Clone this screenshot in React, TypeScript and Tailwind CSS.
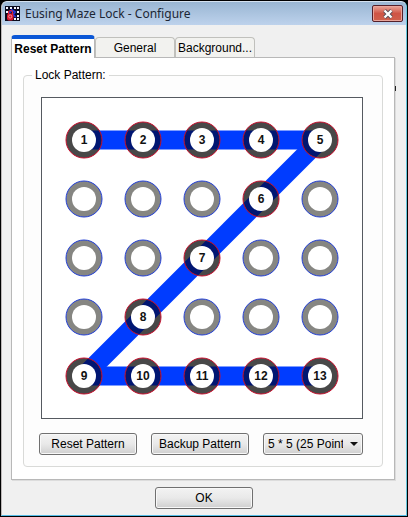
import { useState } from "react";

const SPACING = 59;
const ORIGIN = 42;
const ROUTE = [0, 1, 2, 3, 4, 8, 12, 16, 20, 21, 22, 23, 24];

const center = (i: number) => ({
  x: ORIGIN + (i % 5) * SPACING,
  y: ORIGIN + Math.floor(i / 5) * SPACING,
});

const SEGMENTS = [
  [0, 4],
  [4, 20],
  [20, 24],
];

function Route({ color }: { color: string }) {
  return (
    <>
      {SEGMENTS.map(([a, b]) => (
        <line
          key={a}
          x1={center(a).x}
          y1={center(a).y}
          x2={center(b).x}
          y2={center(b).y}
          stroke={color}
          strokeWidth="19"
        />
      ))}
    </>
  );
}

function Board() {
  const nodes = Array.from({ length: 25 }, (_, i) => i);
  return (
    <div className="border border-[#555a60] bg-white">
      <svg viewBox="0 0 320 320" className="block h-auto w-full" role="img" aria-label="Lock pattern">
        <clipPath id="route-nodes">
          {ROUTE.map((i) => (
            <circle key={i} cx={center(i).x} cy={center(i).y} r="18" />
          ))}
        </clipPath>
        <Route color="#003cff" />
        {nodes.map((i) => (
          <circle
            key={i}
            cx={center(i).x}
            cy={center(i).y}
            r="18"
            fill={ROUTE.includes(i) ? "#484848" : "#868682"}
          />
        ))}
        <g clipPath="url(#route-nodes)">
          <Route color="#001672" />
        </g>
        {nodes.map((i) => {
          const { x, y } = center(i);
          const step = ROUTE.indexOf(i);
          const on = step >= 0;
          return (
            <g key={i}>
              <circle cx={x} cy={y} r="18" fill="none" stroke={on ? "#c8102e" : "#2340d8"} strokeWidth="1" />
              <circle cx={x} cy={y} r="12" fill="#ffffff" />
              {on && (
                <text
                  x={x}
                  y={y + 4}
                  textAnchor="middle"
                  className="fill-[#111111] font-['Liberation_Sans',Arial,sans-serif] text-[12px] font-bold"
                >
                  {step + 1}
                </text>
              )}
            </g>
          );
        })}
      </svg>
    </div>
  );
}

function PushButton({ children }: { children: string }) {
  return (
    <button
      type="button"
      className="h-[22px] w-[98px] rounded-[3px] border border-[#707070] bg-linear-to-b from-[#f3f3f3] from-0% via-[#e9e9e9] via-50% to-[#cfcfcf] text-[12px] leading-5 whitespace-nowrap shadow-[inset_0_0_0_1px_#f8f8f8]"
    >
      {children}
    </button>
  );
}

function MazeIcon() {
  return (
    <svg viewBox="0 0 15 15" className="size-[15px] shrink-0" aria-hidden="true">
      <rect width="15" height="15" fill="#0a0a1c" />
      <path
        d="M1 1h2v2H1zM5 1h2v2H5zM9 1h2v2H9zM12 1h2v2h-2zM12 5h2v2h-2zM12 9h2v2h-2zM12 12h2v2h-2zM9 12h2v2H9zM1 5h2v2H1z"
        fill="#f4f4ff"
      />
      <path d="M4 7L7 4L10 6L8 9L11 11" stroke="#2434d8" strokeWidth="2" fill="none" />
      <path d="M3.5 8V6.5a2 2 0 0 1 4 0V8" stroke="#e02038" strokeWidth="1.2" fill="none" />
      <rect x="2" y="7.5" width="6.5" height="7" rx="2" fill="#d81830" />
      <circle cx="5.2" cy="10.5" r="1.6" fill="none" stroke="#ffb0b8" strokeWidth="0.7" />
    </svg>
  );
}

const TABS = ["Reset Pattern", "General", "Background..."];

export default function App() {
  const [tab, setTab] = useState(0);
  return (
    <div className="bg-black px-px pt-px pb-[2px] font-['Liberation_Sans',Arial,sans-serif] text-[12px] text-black">
      <div className="rounded-t-[6px] border border-t-[#d5e2f0] border-r-[#67c6dc] border-b-[#55bce6] border-l-[#bdb8b8] bg-[#f0f0f0]">
        <header className="flex h-[23px] items-center rounded-t-[5px] bg-linear-to-b from-[#9ab6d3] to-[#bdd2ec] pr-[3px] pl-[3px]">
          <MazeIcon />
          <h1 className="ml-[5px] flex-1 font-['Noto_Sans','Open_Sans',sans-serif] text-[12px] leading-5 text-[#1c2634]">
            Eusing Maze Lock - Configure
          </h1>
          <button
            type="button"
            aria-label="Close"
            className="flex h-[17px] w-[31px] items-center justify-center rounded-[2px] border border-[#54202a] bg-linear-to-b from-[#e8a59a] from-0% via-[#cf5445] via-50% to-[#d0604c] shadow-[inset_0_0_0_1px_#e9a59b]"
          >
            <svg viewBox="0 0 12 10" className="h-[10px] w-[12px]" aria-hidden="true">
              <path d="M2.5 1.5L9.5 8.5M9.5 1.5L2.5 8.5" stroke="#58505a" strokeWidth="4" />
              <path d="M2.5 1.5L9.5 8.5M9.5 1.5L2.5 8.5" stroke="#ffffff" strokeWidth="2.3" />
            </svg>
          </button>
        </header>

        <main className="px-[9px] pt-[10px] pb-[6px]">
          <div role="tablist" className="flex items-end">
            {TABS.map((name, i) => (
              <button
                key={name}
                type="button"
                role="tab"
                aria-selected={i === tab}
                onClick={() => setTab(i)}
                className={
                  i === tab
                    ? "z-10 -mb-px h-[23px] w-[84px] rounded-t-[4px] border-x border-t-4 border-x-[#b8b8b8] border-t-[#0b57d6] bg-white leading-4 font-bold whitespace-nowrap"
                    : "h-[20px] w-[80px] rounded-t-[4px] border border-b-0 border-[#c0c0bc] bg-[#f2f2ef] leading-4 whitespace-nowrap"
                }
              >
                {name}
              </button>
            ))}
          </div>

          <section className="relative mr-[2px] border border-[#b8b8b8] bg-white px-[11px] pt-[9px] pb-[12px] shadow-[1px_1px_0_#dcdcdc]">
            <span className="absolute top-[28px] -right-[2px] h-[5px] w-px bg-[#222222]" aria-hidden="true" />
            <fieldset className="rounded-[4px] border border-[#d9dad8] bg-[#fdfdfd] pr-[19px] pb-[11px] pl-[17px]">
              <legend className="-ml-[9px] px-[3px] leading-4">Lock Pattern:</legend>
              <div className="pt-[14px]">
                <Board />
              </div>
              <div className="-ml-[2px] mt-[14px] flex items-center justify-between">
                <PushButton>Reset Pattern</PushButton>
                <PushButton>Backup Pattern</PushButton>
                <div className="relative">
                  <select
                    aria-label="Grid size"
                    className="block h-[22px] w-[100px] appearance-none rounded-[3px] border border-[#707070] bg-linear-to-b from-[#f3f3f3] from-0% via-[#e9e9e9] via-50% to-[#cfcfcf] pr-[19px] pl-[4px] text-[12px] leading-5 shadow-[inset_0_0_0_1px_#f8f8f8]"
                  >
                    <option>5 * 5 (25 Points)</option>
                    <option>4 * 4 (16 Points)</option>
                    <option>3 * 3 (9 Points)</option>
                  </select>
                  <svg
                    viewBox="0 0 8 4"
                    className="pointer-events-none absolute top-[9px] right-[5px] h-[4px] w-[8px]"
                    aria-hidden="true"
                  >
                    <path d="M0 0H8L4 4Z" fill="#111111" />
                  </svg>
                </div>
              </div>
            </fieldset>
          </section>

          <footer className="mt-[7px] flex justify-center">
            <PushButton>OK</PushButton>
          </footer>
        </main>
      </div>
    </div>
  );
}
